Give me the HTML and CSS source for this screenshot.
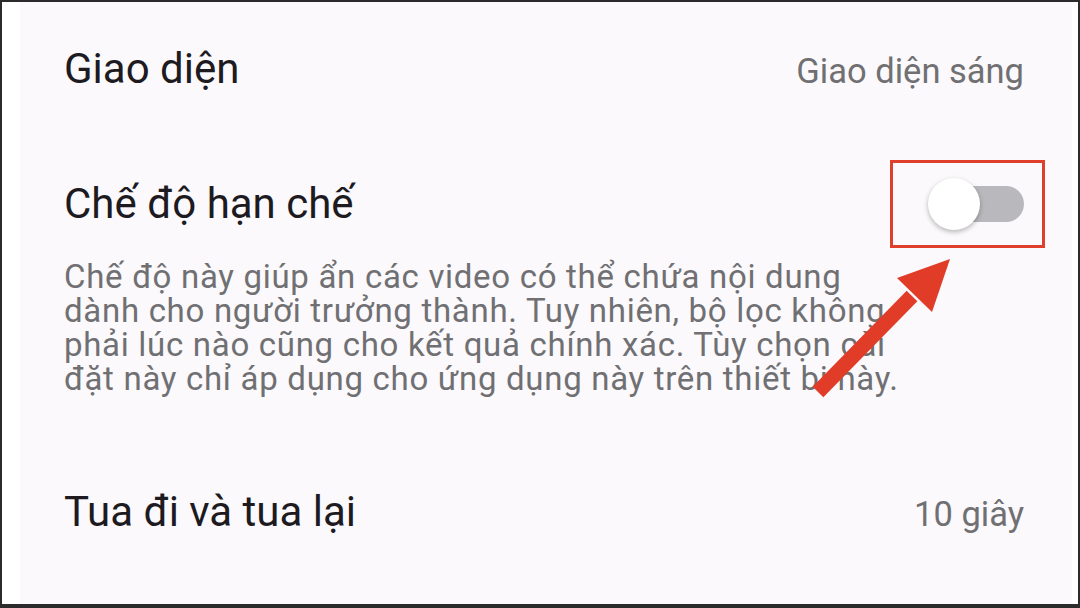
FILE: index.html
```html
<!DOCTYPE html>
<html lang="vi">
<head>
<meta charset="utf-8">
<title>Cài đặt</title>
<link rel="stylesheet" href="styles.css">
</head>
<body>
<div class="frame">
  <div class="screen">
    <div class="row row-first">
      <span class="title">Giao diện</span>
      <span class="value">Giao diện sáng</span>
    </div>
    <div class="row row-toggle">
      <span class="title">Chế độ hạn chế</span>
      <div class="highlight">
        <div class="switch">
          <div class="track"></div>
          <div class="knob"></div>
        </div>
      </div>
    </div>
    <p class="desc">Chế độ này giúp ẩn các video có thể chứa nội dung<br>dành cho người trưởng thành. Tuy nhiên, bộ lọc không<br>phải lúc nào cũng cho kết quả chính xác. Tùy chọn cài<br>đặt này chỉ áp dụng cho ứng dụng này trên thiết bị này.</p>
    <div class="row row-last">
      <span class="title">Tua đi và tua lại</span>
      <span class="value">10 giây</span>
    </div>
  </div>
  <svg class="arrow" width="1080" height="608" viewBox="0 0 1080 608">
    <line x1="818" y1="392" x2="912" y2="296" stroke="#e03c28" stroke-width="15"/>
    <polygon points="950,259 897,278 932,312" fill="#e03c28"/>
  </svg>
</div>
</body>
</html>
```

FILE: styles.css
```css
html, body {
  margin: 0;
  padding: 0;
}
body {
  width: 1080px;
  height: 608px;
  overflow: hidden;
  font-family: Roboto, "Noto Sans", sans-serif;
}
.frame {
  position: relative;
  box-sizing: border-box;
  width: 1080px;
  height: 608px;
  border: 2px solid #2b2b2b;
  border-bottom-width: 4px;
  background: #ffffff;
  display: flex;
}
.screen {
  flex: 1;
  margin-left: 18px;
  margin-right: 6px;
  background: #fbf9fc;
  padding: 43px 48px 0 44px;
  box-sizing: border-box;
}
.row {
  display: flex;
  justify-content: space-between;
  align-items: baseline;
}
.title {
  font-size: 42px;
  line-height: 48px;
  color: #1d1b1f;
}
.value {
  font-size: 34.5px;
  line-height: 48px;
  color: #707073;
}
.row-toggle {
  margin-top: 65px;
  align-items: center;
}
.highlight {
  box-sizing: border-box;
  width: 155px;
  height: 88px;
  border: 3px solid #e0402b;
  display: flex;
  align-items: center;
  padding-left: 35px;
  margin-right: -21px;
}
.switch {
  position: relative;
  width: 96px;
  height: 52px;
}
.track {
  position: absolute;
  left: 10px;
  top: 8px;
  width: 86px;
  height: 36px;
  border-radius: 18px;
  background: #b9b8bc;
}
.knob {
  position: absolute;
  left: 0;
  top: 0;
  width: 52px;
  height: 52px;
  border-radius: 50%;
  background: #ffffff;
  box-shadow: 0 2px 5px rgba(0, 0, 0, 0.28);
}
.desc {
  margin: 12px 0 0 0;
  width: 880px;
  white-space: nowrap;
  font-size: 33px;
  letter-spacing: 0.7px;
  line-height: 34px;
  color: #707073;
}
.row-last {
  margin-top: 92px;
}
.arrow {
  position: absolute;
  left: -2px;
  top: -2px;
  pointer-events: none;
}
```
